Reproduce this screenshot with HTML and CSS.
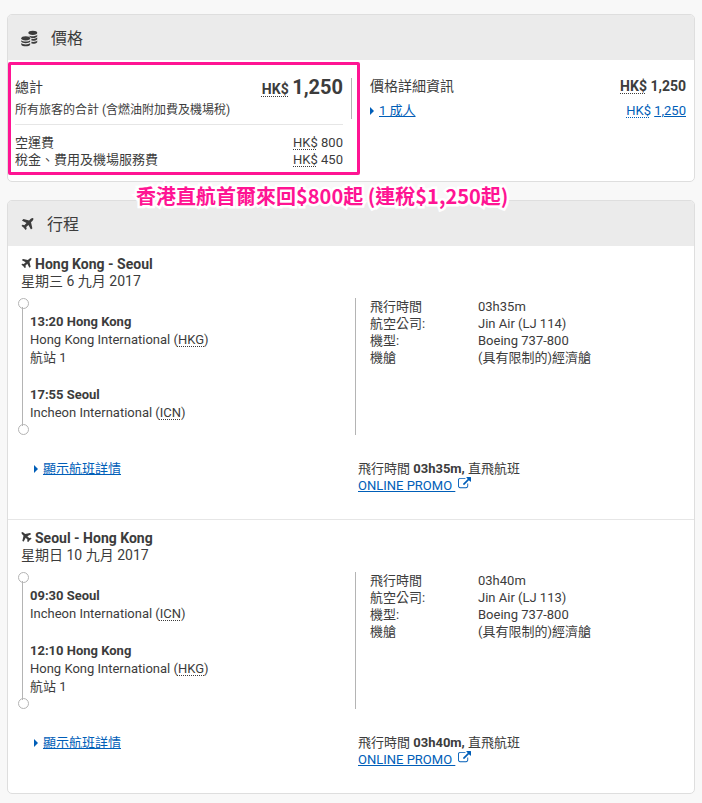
FILE: index.html
```html
<!DOCTYPE html>
<html lang="zh-Hant">
<head>
    <meta charset="UTF-8">
    <meta name="viewport" content="width=device-width, initial-scale=1.0">
    <title>價格及行程</title>
    <link rel="stylesheet" href="styles.css">
</head>
<body>
    <svg class="hidden" aria-hidden="true">
        <symbol id="plane" viewBox="128 128 1536 1536">
            <path d="M1568 160q44 52 12 148t-108 172l-161 161 160 696q5 19-12 33l-128 96q-7 6-19 6-4 0-7-1-15-3-21-16l-279-508-259 259 53 194q5 17-8 31l-96 96q-9 9-23 9h-2q-15-2-24-13l-189-252-252-189q-11-7-13-23-1-13 9-25l96-97q9-9 23-9 6 0 8 1l194 53 259-259-508-279q-14-8-17-24-2-16 9-27l128-128q14-13 30-8l665 159 160-160q76-76 172-108t148 12z"/>
        </symbol>
        <symbol id="external" viewBox="0 0 1792 1792">
            <path d="M1408 928v320q0 119-84.500 203.500t-203.500 84.500h-832q-119 0-203.500-84.500t-84.500-203.500v-832q0-119 84.500-203.500t203.500-84.500h704q14 0 23 9t9 23v64q0 14-9 23t-23 9h-704q-66 0-113 47t-47 113v832q0 66 47 113t113 47h832q66 0 113-47t47-113v-320q0-14 9-23t23-9h64q14 0 23 9t9 23zm384-864v512q0 26-19 45t-45 19-45-19l-176-176-652 652q-10 10-23 10t-23-10l-114-114q-10-10-10-23t10-23l652-652-176-176q-19-19-19-45t19-45 45-19h512q26 0 45 19t19 45z"/>
        </symbol>
    </svg>

    <section class="panel price">
        <h2 class="panel-title">
            <svg class="icon-coins" viewBox="0 0 18 17">
                <ellipse cx="12.500" cy="2.500" rx="4.700" ry="2.200"/>
                <path d="M8 5c1 1.500 8 1.500 9.200-.5v1.700c-1 2-5 2.300-7.200 1.200zM11 8.800c2 .4 5 .1 6.200-1.300v1.700c-1 1.400-4 1.900-6.200 1.500zM11 12c2 .4 5 .1 6.200-1.300v1.700c-1 1.400-4 1.900-6.200 1.500z"/>
                <ellipse cx="5" cy="8.300" rx="4.700" ry="2.200"/>
                <path d="M.3 10.300c1 2 8.400 2 9.400 0V12c-1 2-8.400 2-9.400 0zM.3 13.300c1 2 8.400 2 9.400 0V15c-1 2.200-8.400 2.200-9.400 0z"/>
            </svg>
            價格
        </h2>
        <div class="price-body">
            <div class="price-total">
                <div class="total-head">
                    <div class="row">
                        <h3>總計</h3>
                        <strong><abbr title="港元">HK$</abbr> <span class="big">1,250</span></strong>
                    </div>
                    <p class="note">所有旅客的合計 (含燃油附加費及機場稅)</p>
                </div>
                <dl class="fees">
                    <div class="row">
                        <dt>空運費</dt>
                        <dd><abbr title="港元">HK$</abbr> 800</dd>
                    </div>
                    <div class="row">
                        <dt>稅金、費用及機場服務費</dt>
                        <dd><abbr title="港元">HK$</abbr> 450</dd>
                    </div>
                </dl>
            </div>
            <div class="price-details">
                <div class="row">
                    <h3>價格詳細資訊</h3>
                    <strong><abbr title="港元">HK$</abbr> 1,250</strong>
                </div>
                <div class="row passenger">
                    <span class="toggle"><a href="#">1 成人</a></span>
                    <span class="amount"><abbr title="港元">HK$</abbr> <a href="#">1,250</a></span>
                </div>
            </div>
        </div>
        <p class="callout">香港直航首爾來回$800起 (連稅$1,250起)</p>
    </section>

    <section class="panel">
        <h2 class="panel-title">
            <svg class="icon-plane"><use href="#plane"/></svg>
            行程
        </h2>

        <article class="flight">
            <h3 class="route"><svg class="icon-small"><use href="#plane"/></svg>Hong Kong - Seoul</h3>
            <p class="date">星期三 6 九月 2017</p>
            <div class="flight-info">
                <div class="timeline">
                    <div class="stop">
                        <h4>13:20 Hong Kong</h4>
                        <p>Hong Kong International (<abbr title="Hong Kong">HKG</abbr>)</p>
                        <p>航站 1</p>
                    </div>
                    <div class="stop">
                        <h4>17:55 Seoul</h4>
                        <p>Incheon International (<abbr title="Seoul">ICN</abbr>)</p>
                    </div>
                </div>
                <dl class="facts">
                    <dt>飛行時間</dt>
                    <dd>03h35m</dd>
                    <dt>航空公司:</dt>
                    <dd>Jin Air (LJ 114)</dd>
                    <dt>機型:</dt>
                    <dd>Boeing 737-800</dd>
                    <dt>機艙</dt>
                    <dd>(具有限制的)經濟艙</dd>
                </dl>
            </div>
            <div class="flight-footer">
                <div class="toggle more"><a href="#">顯示航班詳情</a></div>
                <div class="summary">
                    <p>飛行時間 <b>03h35m,</b> 直飛航班</p>
                    <p><a href="#">ONLINE PROMO <svg class="icon-external"><use href="#external"/></svg></a></p>
                </div>
            </div>
        </article>

        <article class="flight">
            <h3 class="route"><svg class="icon-small return"><use href="#plane"/></svg>Seoul - Hong Kong</h3>
            <p class="date">星期日 10 九月 2017</p>
            <div class="flight-info">
                <div class="timeline">
                    <div class="stop">
                        <h4>09:30 Seoul</h4>
                        <p>Incheon International (<abbr title="Seoul">ICN</abbr>)</p>
                    </div>
                    <div class="stop">
                        <h4>12:10 Hong Kong</h4>
                        <p>Hong Kong International (<abbr title="Hong Kong">HKG</abbr>)</p>
                        <p>航站 1</p>
                    </div>
                </div>
                <dl class="facts">
                    <dt>飛行時間</dt>
                    <dd>03h40m</dd>
                    <dt>航空公司:</dt>
                    <dd>Jin Air (LJ 113)</dd>
                    <dt>機型:</dt>
                    <dd>Boeing 737-800</dd>
                    <dt>機艙</dt>
                    <dd>(具有限制的)經濟艙</dd>
                </dl>
            </div>
            <div class="flight-footer">
                <div class="toggle more"><a href="#">顯示航班詳情</a></div>
                <div class="summary">
                    <p>飛行時間 <b>03h40m,</b> 直飛航班</p>
                    <p><a href="#">ONLINE PROMO <svg class="icon-external"><use href="#external"/></svg></a></p>
                </div>
            </div>
        </article>
    </section>
</body>
</html>
```
FILE: styles.css
```css
* {
    box-sizing: border-box;
}

body {
    margin: 0;
    padding: 14px 7px 9px;
    background-color: #f8f8f8;
    color: #3c3c3c;
    font-family: Roboto, "Noto Sans CJK TC", sans-serif;
    font-size: 13px;
    line-height: 17px;
}

h2, h3, h4, p, dl, dd {
    margin: 0;
    font-weight: normal;
}

a {
    color: #005eb8;
}

svg {
    fill: currentColor;
}

abbr {
    text-decoration: underline dotted 1px;
    text-underline-offset: 2px;
}

.hidden {
    display: none;
}

.panel {
    background-color: #fff;
    border: 1px solid #dedede;
    border-radius: 5px;
}

.panel-title {
    display: flex;
    align-items: center;
    gap: 13px;
    height: 45px;
    padding: 2px 13px 0;
    background-color: #ebebeb;
    border-radius: 4px 4px 0 0;
    font-size: 16px;
}

.icon-coins {
    width: 17px;
    height: 17px;
}

.icon-plane {
    width: 13px;
    height: 13px;
}

.row {
    display: flex;
    justify-content: space-between;
    align-items: baseline;
}

/* price */

.price {
    position: relative;
    margin-bottom: 18px;
}

.price-body {
    display: flex;
    gap: 10px;
    padding: 2px 8px 6px 0;
}

.price-body h3,
.price-body strong {
    font-size: 14px;
    line-height: 24px;
}

.price-total {
    flex: 0 0 352px;
    padding: 10px 14px 4px 4px;
    border: 3px solid #ff1493;
    border-radius: 2px;
}

.total-head {
    position: relative;
    padding-bottom: 5px;
    border-bottom: 1px solid #e6e6e6;
}

.total-head::after {
    content: "";
    position: absolute;
    top: 3px;
    right: -9px;
    height: 41px;
    border-right: 1px solid #b4b4b4;
}

.total-head .row {
    align-items: flex-start;
    height: 26px;
}

.big {
    font-size: 20px;
}

.note {
    font-size: 12px;
    line-height: 18px;
}

.fees {
    padding-top: 9px;
}

.price-details {
    flex: 1;
    padding-top: 12px;
}

.passenger {
    line-height: 26px;
}

.amount {
    color: #005eb8;
}

.toggle::before {
    content: "";
    display: inline-block;
    margin-right: 5px;
    border: 4px solid transparent;
    border-left-color: #005eb8;
    border-right-width: 0;
}

.callout {
    position: absolute;
    top: 169px;
    left: 128px;
    color: #ff1493;
    font-family: "Noto Sans CJK TC", sans-serif;
    font-size: 20px;
    font-weight: bold;
    line-height: 24px;
    white-space: nowrap;
    paint-order: stroke fill;
    -webkit-text-stroke: 5px #fff;
}

/* itinerary */

.flight {
    padding: 10px 10px 25px;
}

.flight + .flight {
    border-top: 1px solid #e6e6e6;
}

.route,
.date {
    padding-left: 3px;
    font-size: 14px;
}

.route {
    font-weight: bold;
}

.icon-small {
    width: 11px;
    height: 11px;
    margin-right: 3px;
}

.return {
    transform: scaleX(-1);
}

.flight-info {
    display: flex;
    min-height: 137px;
    margin-top: 8px;
}

.timeline {
    position: relative;
    flex: 0 0 337px;
    display: flex;
    flex-direction: column;
    gap: 19px;
    padding: 15px 12px 12px;
    line-height: 18px;
}

/* line with a ring at each end */
.timeline::before {
    content: "";
    position: absolute;
    top: 9px;
    bottom: 9px;
    left: 4px;
    border-left: 1px solid #b4b4b4;
}

.stop:first-child::before,
.stop:last-child::after {
    content: "";
    position: absolute;
    left: 0;
    width: 9px;
    height: 9px;
    border: 1px solid #b4b4b4;
    border-radius: 50%;
}

.stop:first-child::before {
    top: 0;
}

.stop:last-child::after {
    bottom: 0;
}

.stop h4 {
    font-size: 13px;
    font-weight: bold;
}

.facts {
    flex: 1;
    display: grid;
    grid-template-columns: 108px 1fr;
    align-content: start;
    padding-left: 14px;
    border-left: 1px solid #b4b4b4;
}

.flight-footer {
    display: flex;
    margin-top: 25px;
}

.more {
    flex: 0 0 340px;
    padding-left: 16px;
}

.icon-external {
    width: 13px;
    height: 13px;
    margin-left: 3px;
}
```
